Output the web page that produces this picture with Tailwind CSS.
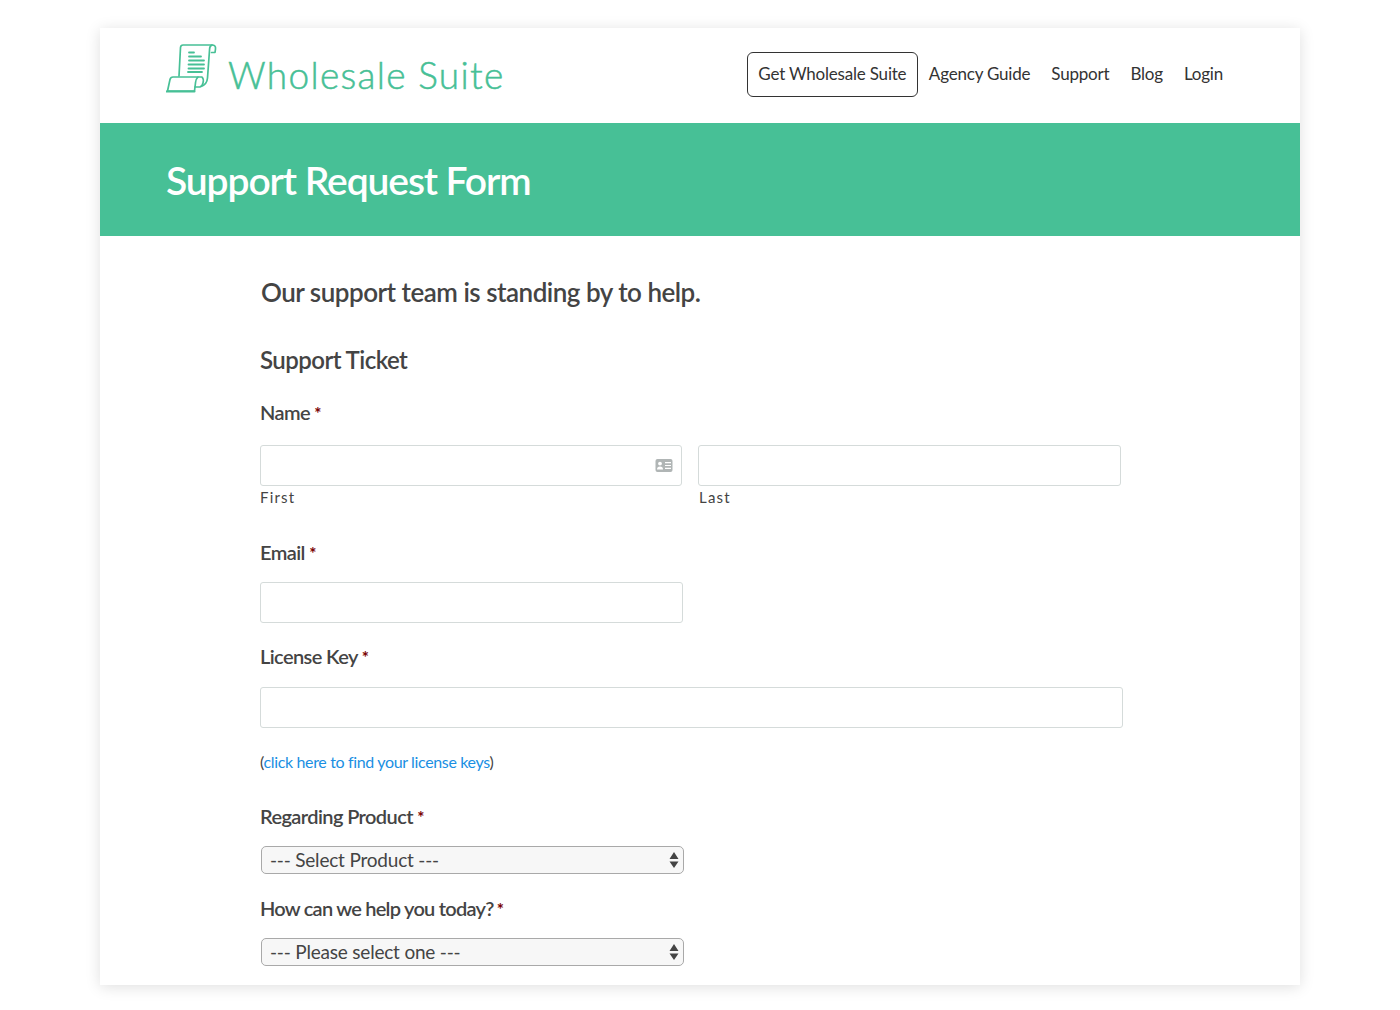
<!DOCTYPE html>
<html lang="en">
<head>
<meta charset="utf-8">
<title>Support Request Form</title>
<script src="https://cdn.jsdelivr.net/npm/@tailwindcss/browser@4"></script>
</head>
<body class="bg-white font-['Lato',sans-serif] text-[#444] overflow-hidden">
<div class="h-[1010px] pt-[28px] px-[100px]">
  <div class="w-[1200px] h-[957px] bg-white shadow-[0_2px_14px_rgba(0,0,0,0.13)] flex flex-col">
    <header class="h-[95px] flex items-center justify-between pl-[66px] pr-[77px] shrink-0">
      <div class="flex items-center gap-[10px] text-[#47c096] mt-[-2px]">
        <svg class="w-[52px] h-[52px] mt-[-16px]" viewBox="0 0 52 52" fill="none" stroke="#47c096" stroke-width="1.7" stroke-linejoin="round" stroke-linecap="round">
          <path d="M13 35 L14.5 6.5 Q14.8 4 17 4 L46 4 Q50 4 49.5 8 L49 11.5 L45.5 11.5"/>
          <path d="M46 4 Q43.6 5 43.6 8 L41.5 37 Q41 43.5 35 45.5"/>
          <path d="M1.5 50 L4 38.5 Q4.6 36 7 36 L32 36 Q30 38 29.6 41 L28.5 50 Z"/>
          <path d="M32 36 L36 36 Q38 38 37 42 Q36.5 45 34 46 L29 46"/>
          <path d="M0.5 50.5 L28.5 50.5" stroke-width="2"/>
          <path d="M23 11.5 L28 11.5 M23 15.5 L35 15.5 M23 19.5 L38 19.5 M22.5 23.5 L38 23.5 M22.5 27.5 L38 27.5 M22 31 L36 31" stroke-width="1.8"/>
        </svg>
        <span class="font-light text-[37px] leading-none tracking-[1.3px] whitespace-nowrap [-webkit-text-stroke:0.5px_#47c096]">Wholesale Suite</span>
      </div>
      <nav class="flex items-center text-[17px] text-[#333] tracking-[-0.2px] mt-[-3px]">
        <a class="h-[45px] w-[171px] flex items-center justify-center border border-[#333] rounded-[6px] mr-[11px]">Get Wholesale Suite</a>
        <a class="mr-[21px]">Agency Guide</a>
        <a class="mr-[21px]">Support</a>
        <a class="mr-[21px]">Blog</a>
        <a>Login</a>
      </nav>
    </header>
    <div class="h-[113px] bg-[#47c096] flex items-center pl-[66px] shrink-0">
      <h1 class="text-[39px] font-semibold text-white tracking-[-1.1px] leading-none mt-[2px]">Support Request Form</h1>
    </div>
    <main class="pl-[160px] flex-1">
      <h2 class="text-[26px] font-semibold tracking-[-0.5px] leading-[32px] mt-[40px] ml-[1px]">Our support team is standing by to help.</h2>
      <h3 class="text-[24px] font-semibold tracking-[-0.55px] leading-[30px] mt-[37px]">Support Ticket</h3>
      <form class="flex flex-col">
        <label class="text-[20px] font-semibold tracking-[-0.6px] leading-[24px] mt-[25px]">Name <span class="text-[#790000] text-[17px] font-bold">*</span></label>
        <div class="flex gap-[16px] mt-[19px]">
          <div class="w-[422px]">
            <div class="h-[41px] border border-[#d5dbda] rounded-[3px] flex items-center justify-end pr-[8px]">
              <svg class="w-[18px] h-[15px]" viewBox="0 0 18 15"><rect x="0.5" y="1" width="17" height="13" rx="2" fill="#b0b5b5"/><circle cx="5" cy="5.6" r="1.9" fill="#fff"/><path d="M2 11.5 Q2 8.4 5 8.4 Q8 8.4 8 11.5 Z" fill="#fff"/><path d="M10 4.6 H16 M10 7.5 H16 M10 10.4 H16" stroke="#fff" stroke-width="1.2"/></svg>
            </div>
            <div class="text-[15px] tracking-[1.2px] leading-[18px] mt-[2px]">First</div>
          </div>
          <div class="w-[423px]">
            <div class="h-[41px] border border-[#d5dbda] rounded-[3px]"></div>
            <div class="text-[15px] tracking-[1.2px] leading-[18px] mt-[2px] ml-[1px]">Last</div>
          </div>
        </div>
        <label class="text-[20px] font-semibold tracking-[-0.6px] leading-[24px] mt-[34px]">Email <span class="text-[#790000] text-[17px] font-bold">*</span></label>
        <div class="w-[423px] h-[41px] border border-[#d5dbda] rounded-[3px] mt-[16px]"></div>
        <label class="text-[20px] font-semibold tracking-[-0.6px] leading-[24px] mt-[21px]">License Key <span class="text-[#790000] text-[17px] font-bold">*</span></label>
        <div class="w-[863px] h-[41px] border border-[#d5dbda] rounded-[3px] mt-[17px]"></div>
        <p class="text-[16px] tracking-[-0.35px] leading-[20px] mt-[24px]">(<a class="text-[#1a8fe3]">click here to find your license keys</a>)</p>
        <label class="text-[20px] font-semibold tracking-[-0.6px] leading-[24px] mt-[32px]">Regarding Product <span class="text-[#790000] text-[17px] font-bold">*</span></label>
        <div class="w-[423px] h-[28px] ml-[1px] mt-[16px] bg-[#f7f7f7] border border-[#a9a9a9] rounded-[5px] flex items-center justify-between pl-[8px] pr-[4px] text-[19px] text-[#444] tracking-[-0.2px]">
          <span>--- Select Product ---</span>
          <svg class="w-[10px] h-[18px]" viewBox="0 0 10 18"><path d="M5 1 L9.5 8 H0.5 Z M0.5 10.5 H9.5 L5 17 Z" fill="#444"/></svg>
        </div>
        <label class="text-[20px] font-semibold tracking-[-0.75px] leading-[24px] mt-[22px]">How can we help you today? <span class="text-[#790000] text-[17px] font-bold ml-[-1px]">*</span></label>
        <div class="w-[423px] h-[28px] ml-[1px] mt-[16px] bg-[#f7f7f7] border border-[#a9a9a9] rounded-[5px] flex items-center justify-between pl-[8px] pr-[4px] text-[19px] text-[#444] tracking-[-0.2px]">
          <span>--- Please select one ---</span>
          <svg class="w-[10px] h-[18px]" viewBox="0 0 10 18"><path d="M5 1 L9.5 8 H0.5 Z M0.5 10.5 H9.5 L5 17 Z" fill="#444"/></svg>
        </div>
      </form>
    </main>
  </div>
</div>
</body>
</html>
